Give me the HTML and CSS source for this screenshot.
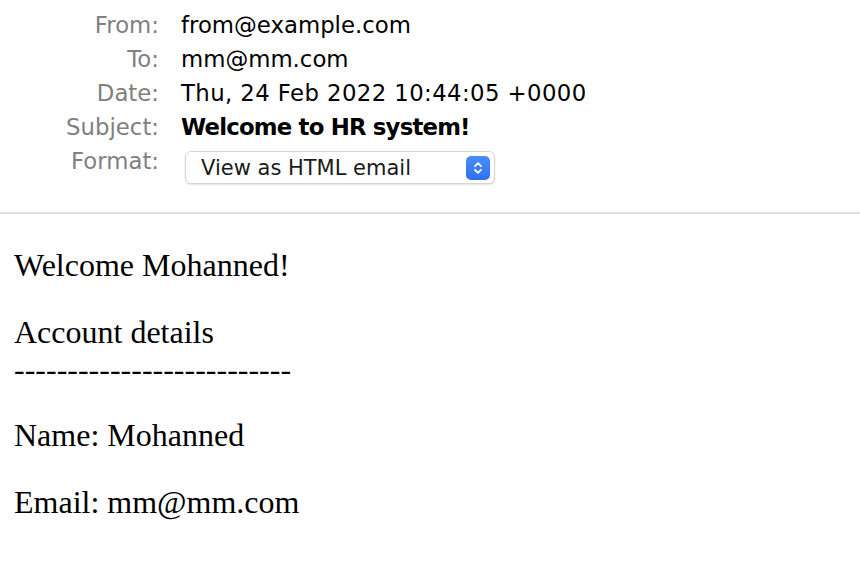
FILE: index.html
```html
<!DOCTYPE html>
<html>
<head>
<meta charset="utf-8">
<link rel="stylesheet" href="styles.css">
</head>
<body>
<div class="header">
  <div class="label">From:</div><div class="value">from@example.com</div>
  <div class="label">To:</div><div class="value">mm@mm.com</div>
  <div class="label">Date:</div><div class="value date">Thu, 24 Feb 2022 10:44:05 +0000</div>
  <div class="label">Subject:</div><div class="value bold">Welcome to HR system!</div>
  <div class="label">Format:</div>
  <div class="value">
    <div class="select">
      <span class="select-text">View as HTML email</span>
      <span class="select-btn">
        <svg width="12" height="16" viewBox="0 0 12 16"><path d="M3 6.2 L6 3.2 L9 6.2 M3 9.8 L6 12.8 L9 9.8" fill="none" stroke="#fff" stroke-width="1.8" stroke-linecap="round" stroke-linejoin="round"/></svg>
      </span>
    </div>
  </div>
</div>
<div class="divider"></div>
<div class="content">
  <p>Welcome Mohanned!</p>
  <p>Account details<br>--------------------------</p>
  <p>Name: Mohanned</p>
  <p>Email: mm@mm.com</p>
</div>
</body>
</html>
```
FILE: styles.css
```css
html, body {
  margin: 0;
  padding: 0;
  background: #fff;
}
.header {
  display: grid;
  grid-template-columns: 159px auto;
  column-gap: 22px;
  row-gap: 0;
  padding-top: 10px;
  padding-bottom: 32px;
  font-family: "DejaVu Sans", sans-serif;
  font-size: 22.8px;
  line-height: 30px;
  align-items: start;
}
.label {
  text-align: right;
  color: #808080;
  height: 34px;
}
.value {
  color: #000;
  height: 34px;
}
.date {
  letter-spacing: 0.4px;
}
.bold {
  font-weight: bold;
  letter-spacing: -0.8px;
}
.select {
  display: inline-flex;
  align-items: center;
  justify-content: space-between;
  margin-left: 4px;
  margin-top: 5px;
  width: 310px;
  height: 33px;
  box-sizing: border-box;
  border: 1px solid #d6d6d6;
  border-radius: 6px;
  box-shadow: 0 1px 2px rgba(0,0,0,0.12);
  padding: 0 4px 0 15px;
  background: #fff;
}
.select-text {
  color: #1a1a1a;
  font-size: 21px;
}
.select-btn {
  width: 24px;
  height: 24px;
  border-radius: 5px;
  background: linear-gradient(#4a8ef8, #2f6ff0);
  display: flex;
  align-items: center;
  justify-content: center;
}
.divider {
  height: 2px;
  background: #dddddd;
}
.content {
  padding: 3px 14px 0 14px;
  font-family: "Liberation Serif", serif;
  font-size: 32px;
  line-height: 1.15;
  color: #000;
}
.content p {
  margin: 30px 0 0 0;
}
```
